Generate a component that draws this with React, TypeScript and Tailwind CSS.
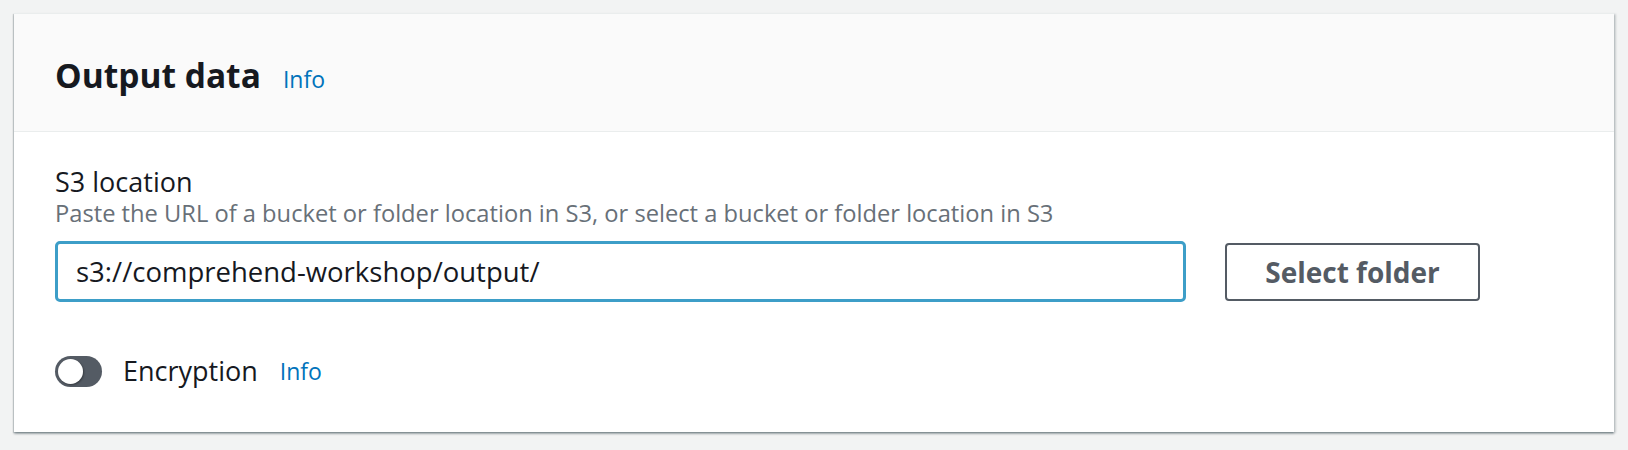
import React, { useState } from "react";

const font = { fontFamily: '"Open Sans", "Noto Sans", sans-serif' };

const OutputData: React.FC = () => {
  const [path, setPath] = useState("s3://comprehend-workshop/output/");
  const [encrypt, setEncrypt] = useState(false);

  return (
    <div className="h-[450px] bg-[#f2f3f3] px-[14px] pt-[13px]" style={font}>
      <div className="bg-white border-t border-[#eaeded] shadow-[0_2px_2px_0_rgba(0,28,36,0.3),2px_1px_2px_0_rgba(0,28,36,0.15),-1px_1px_1px_0_rgba(0,28,36,0.15)]">
        {/* Header */}
        <div className="h-[118px] bg-[#fafafa] border-b border-[#eaeded] px-[41px] pt-[40px]">
          <div className="flex items-baseline gap-[22px]">
            <h2 className="text-[33.5px] leading-[42px] font-bold text-[#16191f]">Output data</h2>
            <a className="text-[23px] text-[#0073bb] cursor-pointer">Info</a>
          </div>
        </div>

        {/* Body */}
        <div className="px-[41px] pt-[33px] pb-[45px]">
          <label className="block text-[27px] leading-[34px] text-[#16191f]">S3 location</label>
          <p className="text-[23.7px] leading-[28px] text-[#687078]">
            Paste the URL of a bucket or folder location in S3, or select a bucket or folder location in S3
          </p>

          <div className="mt-[14px] flex items-center">
            <input
              value={path}
              onChange={(e) => setPath(e.target.value)}
              className="w-[1131px] h-[61px] rounded-[5px] border-[3px] border-[#3d9ec8] pl-[18px] text-[27.5px] text-[#16191f] outline-none"
              style={font}
            />
            <button className="ml-[39px] w-[255px] h-[58px] rounded-[4px] border-2 border-[#545b64] bg-white text-[28px] font-bold text-[#545b64]">
              Select folder
            </button>
          </div>

          {/* Encryption toggle */}
          <div className="mt-[54px] flex items-center h-[31px]">
            <button
              onClick={() => setEncrypt(!encrypt)}
              className={`relative w-[47px] h-[31px] rounded-full ${encrypt ? "bg-[#0073bb]" : "bg-[#545b64]"}`}
            >
              <span
                className={`absolute top-[3px] h-[25px] w-[25px] rounded-full bg-white shadow-[1px_1px_2px_rgba(0,0,0,0.35)] ${
                  encrypt ? "left-[19px]" : "left-[3px]"
                }`}
              />
            </button>
            <span className="ml-[21px] text-[27px] text-[#16191f]">Encryption</span>
            <a className="ml-[22px] text-[23px] text-[#0073bb] cursor-pointer">Info</a>
          </div>
        </div>
      </div>
    </div>
  );
};

export default function App() {
  return <OutputData />;
}
